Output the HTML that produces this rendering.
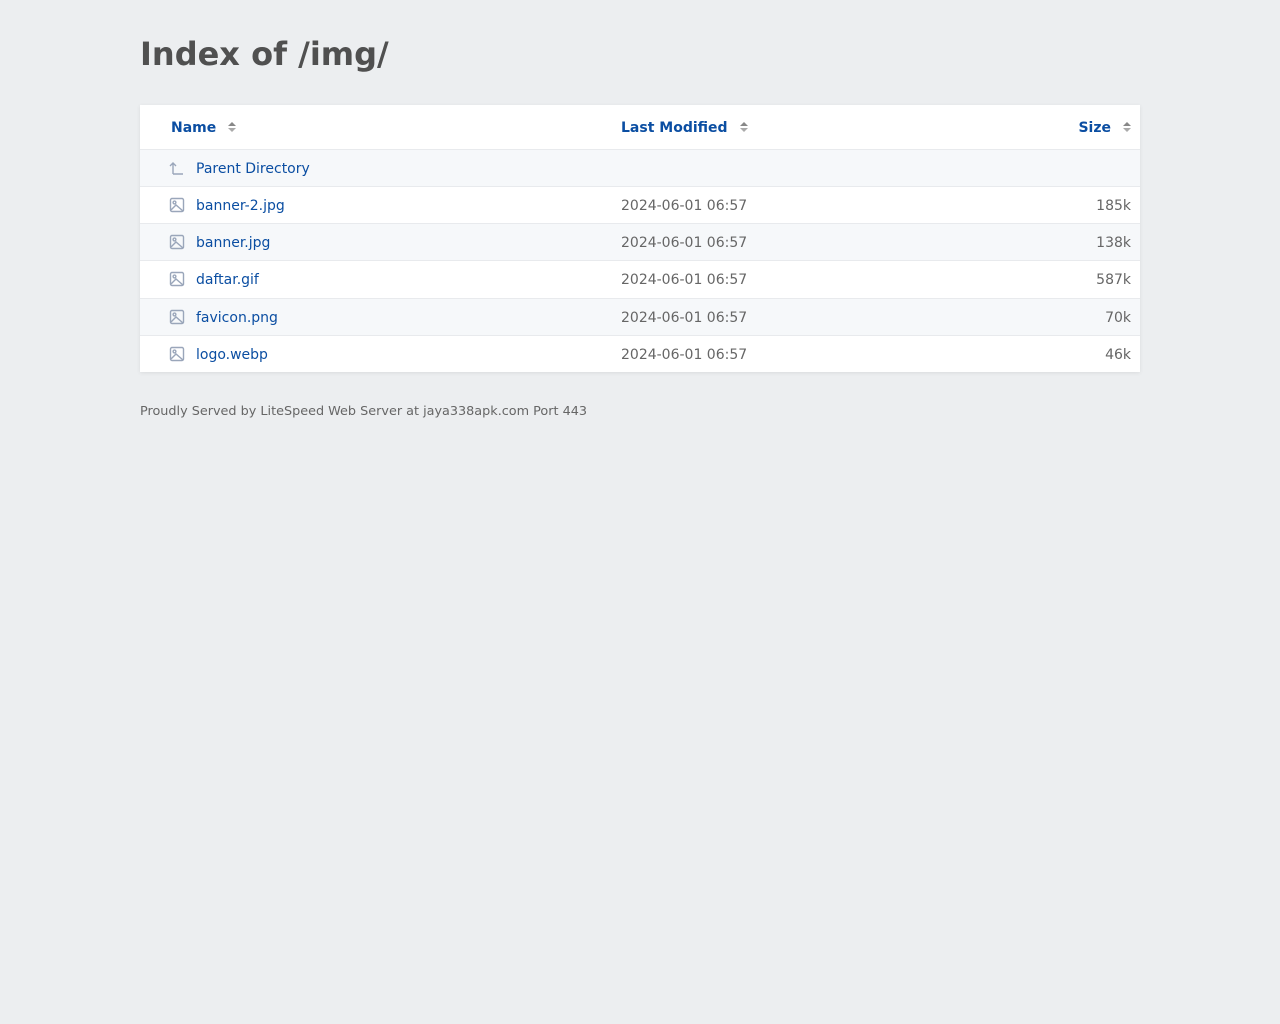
<!DOCTYPE html>
<html><head><meta charset="utf-8"><style>
body{margin:0;background:#eceef0;font-family:"DejaVu Sans",sans-serif;font-size:14px;color:#555}
h1{position:absolute;left:140px;top:35px;margin:0;font-size:32px;font-weight:bold;color:#505050;line-height:38px}
.box{position:absolute;left:140px;top:105px;width:1000px;background:#fff;box-shadow:0 1px 4px rgba(0,0,0,.08)}
.row{position:relative;height:37px;border-top:1px solid #e8eaed;box-sizing:border-box}
.row:nth-child(even){background:#f6f8fa}
.hd{height:44px;border-top:none;background:#fff!important}
.c{position:absolute;top:0;line-height:38px;white-space:nowrap}
.hd .c{line-height:46px;font-weight:bold;color:#0b4ea2}
a{color:#0b4ea2;text-decoration:none}
.n{left:56px}.d{left:481px;color:#666}.s{right:9px;color:#666}
.ic{position:absolute;left:29px;top:10px}
.ar{display:inline-block;vertical-align:middle;margin-left:12px;width:8px;height:10px;position:relative;top:-1px}
.ar:before{content:"";position:absolute;left:0;top:0;border:4px solid transparent;border-top:0;border-bottom:4px solid #888}
.ar:after{content:"";position:absolute;left:0;top:6px;border:4px solid transparent;border-bottom:0;border-top:4px solid #aaa}
.ft{position:absolute;left:140px;top:404px;font-size:12.8px;color:#666}
</style></head><body>
<h1>Index of /img/</h1>
<div class="box">
<div class="row hd"><span class="c" style="left:31px">Name<span class="ar"></span></span><span class="c" style="left:481px">Last Modified<span class="ar"></span></span><span class="c" style="right:9px">Size<span class="ar"></span></span></div>
<div class="row"><svg class="ic" width="16" height="16" viewBox="0 0 16 16" fill="none" stroke="#9aa6ba" stroke-width="1.4"><path d="M4 14V3M1 6l3-3 3 3M4 14h10"/></svg><span class="c n"><a>Parent Directory</a></span></div>
<div class="row"><svg class="ic" width="16" height="16" viewBox="0 0 16 16" fill="none" stroke="#9aa6ba" stroke-width="1.4"><rect x="1.5" y="1.5" width="13" height="13" rx="1.5"/><circle cx="5.5" cy="5.5" r="1.4"/><path d="M2 13l5-5 7 6"/></svg><span class="c n"><a>banner-2.jpg</a></span><span class="c d">2024-06-01 06:57</span><span class="c s">185k</span></div>
<div class="row"><svg class="ic" width="16" height="16" viewBox="0 0 16 16" fill="none" stroke="#9aa6ba" stroke-width="1.4"><rect x="1.5" y="1.5" width="13" height="13" rx="1.5"/><circle cx="5.5" cy="5.5" r="1.4"/><path d="M2 13l5-5 7 6"/></svg><span class="c n"><a>banner.jpg</a></span><span class="c d">2024-06-01 06:57</span><span class="c s">138k</span></div>
<div class="row" style="height:38px"><svg class="ic" width="16" height="16" viewBox="0 0 16 16" fill="none" stroke="#9aa6ba" stroke-width="1.4"><rect x="1.5" y="1.5" width="13" height="13" rx="1.5"/><circle cx="5.5" cy="5.5" r="1.4"/><path d="M2 13l5-5 7 6"/></svg><span class="c n"><a>daftar.gif</a></span><span class="c d">2024-06-01 06:57</span><span class="c s">587k</span></div>
<div class="row"><svg class="ic" width="16" height="16" viewBox="0 0 16 16" fill="none" stroke="#9aa6ba" stroke-width="1.4"><rect x="1.5" y="1.5" width="13" height="13" rx="1.5"/><circle cx="5.5" cy="5.5" r="1.4"/><path d="M2 13l5-5 7 6"/></svg><span class="c n"><a>favicon.png</a></span><span class="c d">2024-06-01 06:57</span><span class="c s">70k</span></div>
<div class="row"><svg class="ic" width="16" height="16" viewBox="0 0 16 16" fill="none" stroke="#9aa6ba" stroke-width="1.4"><rect x="1.5" y="1.5" width="13" height="13" rx="1.5"/><circle cx="5.5" cy="5.5" r="1.4"/><path d="M2 13l5-5 7 6"/></svg><span class="c n"><a>logo.webp</a></span><span class="c d">2024-06-01 06:57</span><span class="c s">46k</span></div>
</div>
<div class="ft">Proudly Served by LiteSpeed Web Server at jaya338apk.com Port 443</div>
</body></html>
